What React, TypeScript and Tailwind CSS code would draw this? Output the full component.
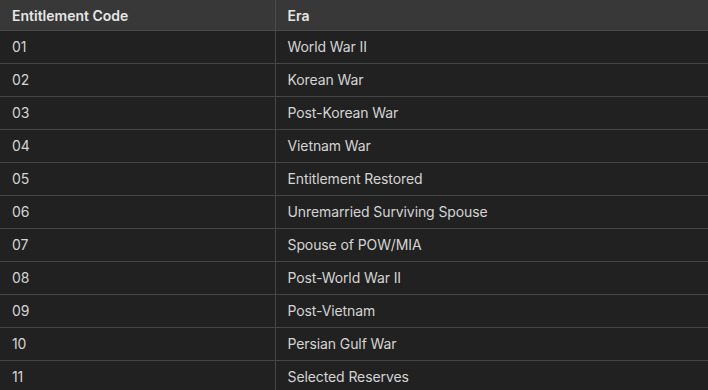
import React from "react";

const rows: [string, string][] = [
  ["01", "World War II"],
  ["02", "Korean War"],
  ["03", "Post-Korean War"],
  ["04", "Vietnam War"],
  ["05", "Entitlement Restored"],
  ["06", "Unremarried Surviving Spouse"],
  ["07", "Spouse of POW/MIA"],
  ["08", "Post-World War II"],
  ["09", "Post-Vietnam"],
  ["10", "Persian Gulf War"],
  ["11", "Selected Reserves"],
];

export default function App() {
  return (
    <div
      className="w-[708px] h-[390px] overflow-hidden bg-[#212121]"
      style={{ fontFamily: "Inter, 'Noto Sans', sans-serif" }}
    >
      <table className="w-full border-collapse text-[14px]">
        <thead>
          <tr className="bg-[#383838] h-[30px] border-b border-[#4a4a4a]">
            <th className="w-[275px] border-r border-[#4a4a4a] px-3 pt-px text-left font-semibold text-[#e6e6e6]">
              Entitlement Code
            </th>
            <th className="px-3 pt-px text-left font-semibold text-[#e6e6e6]">Era</th>
          </tr>
        </thead>
        <tbody>
          {rows.map(([code, era]) => (
            <tr key={code} className="h-[33px] border-b border-[#454545]">
              <td className="w-[275px] border-r border-[#454545] px-3 text-[#d4d4d4] tracking-[-0.1px]">{code}</td>
              <td className="px-3 text-[#d4d4d4] tracking-[-0.1px]">{era}</td>
            </tr>
          ))}
        </tbody>
      </table>
    </div>
  );
}
